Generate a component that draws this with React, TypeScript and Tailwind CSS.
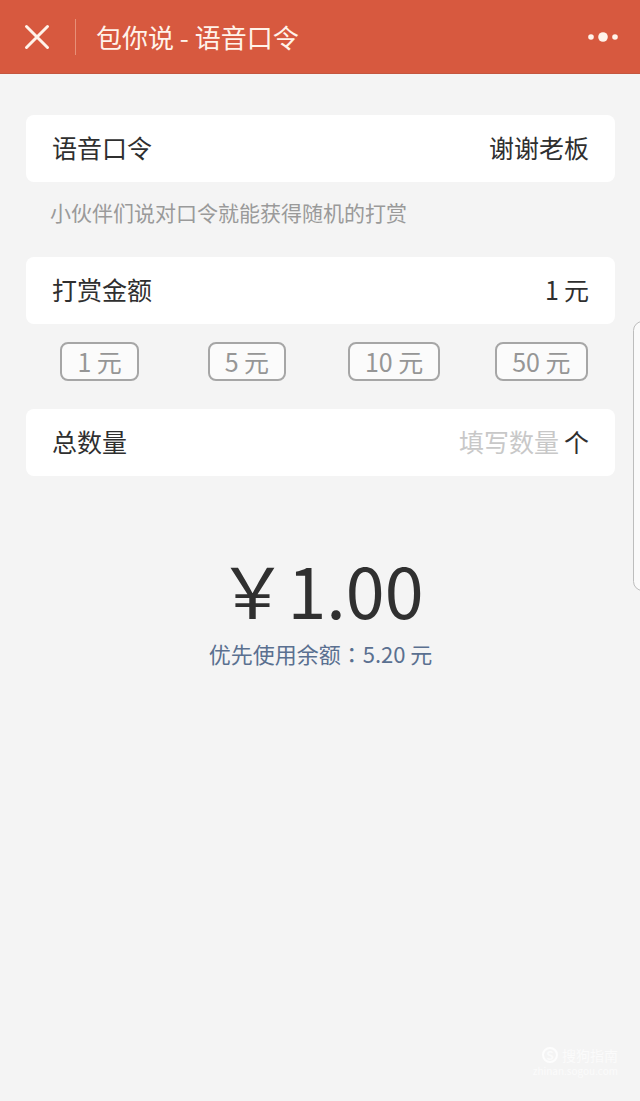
import { useState } from "react";
import type { ReactNode } from "react";

const presets = [1, 5, 10, 50];

function Row({ id, label, children }: { id: string; label: string; children: ReactNode }) {
  return (
    <div className="flex h-[67px] items-center justify-between rounded-lg bg-white px-[26px] pb-1 text-[25px] leading-9 text-[#2f2f2f]">
      <label htmlFor={id} className="shrink-0">
        {label}
      </label>
      <div className="flex min-w-0 flex-1 items-center justify-end gap-[5px]">{children}</div>
    </div>
  );
}

const fieldClass =
  "min-w-0 flex-1 bg-transparent text-right outline-none placeholder:text-[#c8c8c8] placeholder:opacity-100";

export default function App() {
  const [phrase, setPhrase] = useState("谢谢老板");
  const [amount, setAmount] = useState("1");
  const [count, setCount] = useState("");

  return (
    <div
      lang="zh-CN"
      className="relative flex min-h-screen flex-col overflow-hidden bg-[#f4f4f4] font-['Noto_Sans_CJK_SC',sans-serif]"
    >
      <header className="flex h-[74px] items-center border-b border-[#c4563f] bg-[#d7593f] pr-[21px] pl-6 text-[#fff3ea]">
        <button type="button" aria-label="关闭" className="shrink-0">
          <svg width="26" height="26" viewBox="0 0 26 26" fill="none" stroke="currentColor" strokeWidth="3" strokeLinecap="round">
            <path d="M2.5 2.5 23.5 23.5M23.5 2.5 2.5 23.5" />
          </svg>
        </button>
        <span className="ml-[25px] h-9 w-px bg-[#e79078]" />
        <h1 className="ml-5 flex-1 text-[26px] leading-9">包你说 - 语音口令</h1>
        <button type="button" aria-label="更多" className="shrink-0">
          <svg width="32" height="12" viewBox="0 0 32 12" fill="currentColor">
            <circle cx="4" cy="6" r="2.8" />
            <circle cx="16" cy="6" r="4.8" />
            <circle cx="28" cy="6" r="2.8" />
          </svg>
        </button>
      </header>

      <main className="flex flex-col pt-[41px] pr-[25px] pl-[26px]">
        <Row id="phrase" label="语音口令">
          <input id="phrase" className={fieldClass} value={phrase} onChange={(e) => setPhrase(e.target.value)} />
        </Row>
        <p className="px-6 pt-[15px] pb-[29px] text-[21px] leading-[31px] text-[#9a9a9a]">小伙伴们说对口令就能获得随机的打赏</p>

        <Row id="amount" label="打赏金额">
          <input id="amount" inputMode="decimal" className={fieldClass} value={amount} onChange={(e) => setAmount(e.target.value)} />
          <span>元</span>
        </Row>
        <div className="grid grid-cols-4 justify-items-center pt-[18px] pb-7">
          {presets.map((value) => (
            <button
              key={value}
              type="button"
              onClick={() => setAmount(String(value))}
              className="flex h-[39px] items-center rounded-lg border-2 border-[#a6a6a6] bg-[#fbfbfb] px-[15px] pb-[2px] text-[25px] leading-8 text-[#969696]"
            >
              {value} 元
            </button>
          ))}
        </div>

        <Row id="count" label="总数量">
          <input
            id="count"
            inputMode="numeric"
            placeholder="填写数量"
            className={fieldClass}
            value={count}
            onChange={(e) => setCount(e.target.value)}
          />
          <span>个</span>
        </Row>

        <div className="flex flex-col items-center pt-16">
          <p className="text-[70px] leading-[97px] text-[#303030]">￥1.00</p>
          <p className="text-[22px] leading-8 text-[#5a7090]">
            优先使用余额<span lang="zh-TW" className="font-['Noto_Sans_CJK_TC',sans-serif]">：</span>5.20 元
          </p>
        </div>
      </main>

      <aside className="absolute top-[321px] -right-3 h-[270px] w-[19px] rounded-xl border border-[#bdbdbd] bg-[#fafafa]" />

      <footer className="mt-auto flex flex-col items-end pr-[22px] pb-6 text-[#fbfbfb]">
        <div className="flex items-center gap-1 text-sm leading-5">
          <span className="flex size-4 items-center justify-center rounded-full border-2 border-[#fdfdfd] text-xs font-bold">S</span>
          搜狗指南
        </div>
        <div className="text-[10px] leading-3">zhinan.sogou.com</div>
      </footer>
    </div>
  );
}
